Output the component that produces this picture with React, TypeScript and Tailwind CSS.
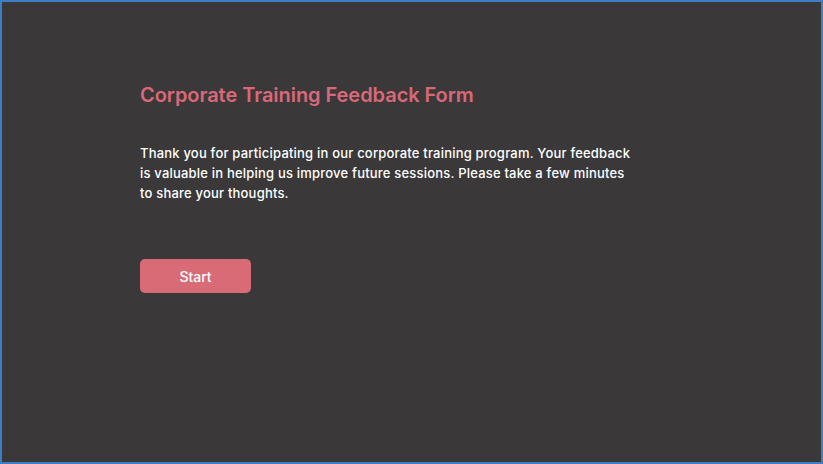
import React from "react";

export default function App() {
  return (
    <div
      className="w-[823px] h-[464px] bg-[#3a3839] border-2 border-[#3b80c6] box-border"
      style={{ fontFamily: "Inter, 'Noto Sans', sans-serif" }}
    >
      <div className="pl-[138px] pt-[79px] flex flex-col items-start">
        <h1 className="text-[20px] leading-[28px] font-semibold text-[#da6878] tracking-[-0.05px]">
          Corporate Training Feedback Form
        </h1>
        <p className="mt-[34px] whitespace-nowrap text-[13px] leading-[20px] font-medium text-white tracking-[0.2px]">
          Thank you for participating in our corporate training program. Your feedback
          <br />
          is valuable in helping us improve future sessions. Please take a few minutes
          <br />
          to share your thoughts.
        </p>
        <button className="mt-[56px] w-[111px] h-[34px] rounded-[5px] bg-[#d96b77] text-white text-[14px] font-medium">
          Start
        </button>
      </div>
    </div>
  );
}
